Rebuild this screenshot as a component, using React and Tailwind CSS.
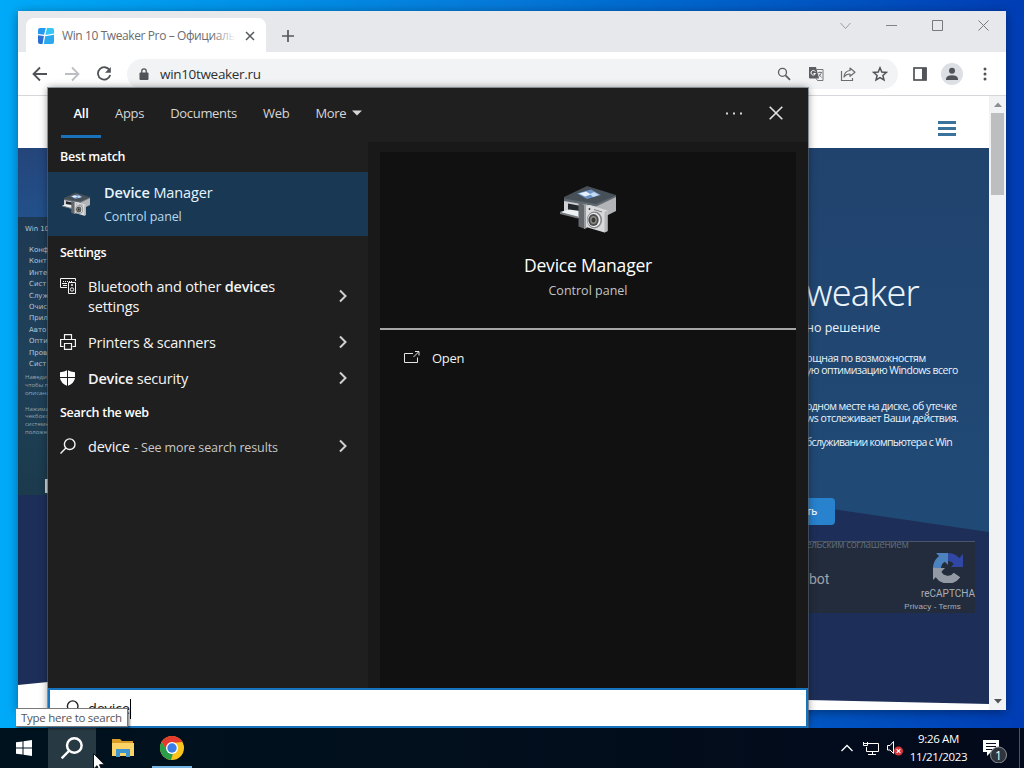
import React, { useState } from 'react';

const tabs = ['Apps', 'Documents', 'Web'];

const menuItems = ['Конф', 'Конт', 'Инте', 'Сист', 'Служ', 'Очис', 'Прил', 'Авто', 'Опти', 'Пров', 'Сист'];

const Chevron = () => (
  <svg className="-mr-px" width="10" height="14" viewBox="0 0 10 14" fill="none" stroke="#d0d0d0" strokeWidth="2">
    <path d="M2 1.5 7.5 7 2 12.5" />
  </svg>
);

const DeviceIcon = ({ className }) => (
  <svg className={className} viewBox="0 0 56 48">
    <path d="M4 12 27 1 56 10 36 20 4 14Z" fill="#465056" />
    <path d="M4 13.500 36 19 56 10 56 12.500 36 22 4 16.500Z" fill="#5d676d" />
    <path d="M4 16 36 21.500 36 36 4 28Z" fill="#cfd0d3" />
    <path d="M36 21.500 56 12 56 26 36 36Z" fill="#b2b4b7" />
    <path d="M17 8.500 31 4.500 41 10 27 14Z" fill="#6f93c4" />
    <path d="M19 8.500 26 6.500 31 9.500 25 11.500Z" fill="#e4f0fb" />
    <path d="M30 9 34 7 39 10 33 12Z" fill="#c4daf2" />
    <path d="M8 18.500 21 21 21 28 8 25Z" fill="#23282d" />
    <path d="M0 27 9 24.500 20 26 20 33 16 32.500Z" fill="#eef1f2" />
    <path d="M0 27 18 31.500 18 33.500 0 29Z" fill="#757b80" />
    <path d="M18.500 18 25 20 25 44 18.500 41.500Z" fill="#63676b" />
    <path d="M24 20 27 18.500 27 43 24 44Z" fill="#989b9e" />
    <path d="M26 20.500 30 20 47.500 25.500 47.500 46 44.500 47.500 26 42Z" fill="#d9dadc" />
    <path d="M44.500 27 47.500 25.500 47.500 46 44.500 47.500Z" fill="#b6b8ba" />
    <circle cx="29.500" cy="24" r=".9" fill="#33373a" />
    <path d="M34 24.500 42 27" stroke="#777b7e" />
    <ellipse cx="34.500" cy="35" rx="7.600" ry="8.400" fill="#85878a" />
    <ellipse cx="34" cy="35" rx="6.500" ry="7.200" fill="#ededee" />
    <ellipse cx="33.500" cy="35" rx="5.200" ry="6" fill="#4a4d50" />
    <ellipse cx="33.500" cy="35" rx="3.400" ry="4" fill="#8b8a86" />
    <ellipse cx="33.500" cy="35" rx="2" ry="2.500" fill="#3a3832" />
  </svg>
);

const Magnifier = ({ className, color, width = 1.4 }) => (
  <svg className={className} viewBox="0 0 16 16" fill="none" stroke={color} strokeWidth={width}>
    <circle cx="9.700" cy="6.200" r="5.300" />
    <path d="M5.900 10 .5 15.500" />
  </svg>
);

const TabStrip = () => (
  <div className="flex h-[41px] shrink-0 items-end bg-[#e7e8eb] pl-2">
    <div className="flex h-[34px] w-[240px] items-center rounded-t-lg bg-white pl-3 pr-[11px] pt-px">
      <svg className="h-4 w-4 shrink-0" viewBox="0 0 16 16">
        <path d="M2 0H7.800L6 6.800 0 6V2Q0 0 2 0Z" fill="#2499ee" />
        <path d="M9 0H14Q16 0 16 2V5.500L7.300 7Z" fill="#35c6f6" />
        <path d="M0 7.200 5.900 8 4.500 16H2Q0 16 0 14Z" fill="#2b6fd6" />
        <path d="M7.200 8.200 16 6.800V14Q16 16 14 16H5.800Z" fill="#2aa8f0" />
      </svg>
      <div className="relative ml-2 w-[174px] overflow-hidden whitespace-nowrap text-[12px] tracking-[-0.4px] text-[#6b6d70]">
        Win 10 Tweaker Pro – Официаль
        <span className="absolute right-0 top-0 h-full w-6 bg-gradient-to-r from-transparent to-white" />
      </div>
      <svg className="ml-auto h-2.5 w-2.5" viewBox="0 0 10 10" stroke="#55585c" strokeWidth="1.500">
        <path d="M1 1 9 9M9 1 1 9" />
      </svg>
    </div>
    <svg className="mb-2.5 ml-4 h-3 w-3" viewBox="0 0 12 12" stroke="#55585c" strokeWidth="1.700">
      <path d="M6 0V12M0 6H12" />
    </svg>
    <div className="ml-auto mb-[21px] flex items-center gap-[35px] pr-[17px]">
      <svg width="11" height="11" viewBox="0 0 11 11" fill="none" stroke="#9a9ca0">
        <path d="M.5 3 5.500 8.500 10.500 3" />
      </svg>
      <svg width="11" height="11" viewBox="0 0 11 11" stroke="#808285">
        <path d="M0 5.500H11" />
      </svg>
      <svg width="11" height="11" viewBox="0 0 11 11" fill="none" stroke="#77797c">
        <path d="M.5.5H10.500V10.500H.5Z" />
      </svg>
      <svg width="11" height="11" viewBox="0 0 11 11" stroke="#77797c">
        <path d="M.5.5 10.500 10.500M10.500.5.5 10.500" />
      </svg>
    </div>
  </div>
);

const Toolbar = () => (
  <div className="flex h-11 shrink-0 items-center border-b border-[#d5d7da] bg-white pl-3.5">
    <svg className="h-4 w-4" viewBox="0 0 16 16" fill="none" stroke="#505357" strokeWidth="1.800">
      <path d="M15 8H2M8 1.500 1.500 8 8 14.500" />
    </svg>
    <svg className="ml-4 h-4 w-4" viewBox="0 0 16 16" fill="none" stroke="#bcbec1" strokeWidth="1.800">
      <path d="M1 8H14M8 1.500 14.500 8 8 14.500" />
    </svg>
    <svg className="ml-4 h-4 w-4" viewBox="0 0 16 16" fill="none" stroke="#505357" strokeWidth="1.800">
      <path d="M13.500 4.200A6.200 6.200 0 1 0 14.200 9" />
      <path d="M14.800 1V6.700H9Z" fill="#505357" stroke="none" />
    </svg>
    <div className="ml-[15px] flex h-[30px] w-[771px] items-center rounded-full bg-[#f1f3f4] pl-3 pr-2.5">
      <svg className="h-3 w-2.5" viewBox="0 0 10 12">
        <rect x=".5" y="4.500" width="9" height="7.500" rx="1" fill="#505357" />
        <path d="M2.800 5V3A2.200 2.200 0 0 1 7.200 3V5" fill="none" stroke="#505357" strokeWidth="1.300" />
      </svg>
      <span className="ml-[11px] pt-0.5 text-[13.500px] tracking-[-0.32px] text-[#2e3033]">win10tweaker.ru</span>
      <div className="ml-auto flex items-center gap-4">
        <svg className="h-4 w-4" viewBox="0 0 16 16" fill="none" stroke="#5b5e62" strokeWidth="1.300">
          <circle cx="6.500" cy="6.300" r="4" />
          <path d="M9.500 9.300 14 13.800" strokeWidth="1.800" />
        </svg>
        <svg className="h-4 w-4" viewBox="0 0 16 16">
          <path d="M1 1H8L11 12.500H2Q1 12.500 1 11.500Z" fill="#5b5e62" />
          <path d="M8.300 3.500H15V14.500H9.500L8 12.500" fill="none" stroke="#74777b" />
          <path d="M7.300 5.600A2.300 2.300 0 1 0 7.500 7.500H5.500" fill="none" stroke="#fff" />
          <path d="M10 6.500H14M12 5.500V6.500M13.500 6.500Q12.500 9.500 10.300 11M10.700 8 13.500 11.500" fill="none" stroke="#74777b" strokeWidth=".9" />
        </svg>
        <svg className="h-4 w-4" viewBox="0 0 16 16" fill="none" stroke="#6b6e72" strokeWidth="1.200">
          <path d="M1.500 5V14.500H12.500V12" />
          <path d="M10 2 15 6.200 10 10.300V8Q6 8 4 11 4.500 5 10 4.500Z" strokeLinejoin="round" />
        </svg>
        <svg className="h-4 w-4" viewBox="0 0 16 16" fill="none" stroke="#505357" strokeWidth="1.500">
          <path d="M8 1.800 9.800 6 14.400 6.400 10.900 9.400 12 13.900 8 11.500 4 13.900 5.100 9.400 1.600 6.400 6.200 6Z" />
        </svg>
      </div>
    </div>
    <svg className="ml-[15px] h-3.5 w-3.5" viewBox="0 0 14 14">
      <rect x="1" y="1" width="12" height="12" fill="none" stroke="#505357" strokeWidth="1.700" />
      <rect x="9" y="1" width="4.500" height="12" fill="#505357" />
    </svg>
    <svg className="ml-3.5 h-[22px] w-[22px]" viewBox="0 0 22 22">
      <circle cx="11" cy="11" r="11" fill="#dcdfe3" />
      <circle cx="11" cy="7.800" r="3" fill="#505357" />
      <path d="M5 17V15.500Q6 12.300 11 12.300T17 15.500V17Z" fill="#505357" />
    </svg>
    <svg className="ml-5 h-3.5 w-1" viewBox="0 0 4 14" fill="#505357">
      <circle cx="2" cy="2" r="1.500" />
      <circle cx="2" cy="7" r="1.500" />
      <circle cx="2" cy="12" r="1.500" />
    </svg>
  </div>
);

const WebPage = () => (
  <div className="flex min-h-0 flex-1">
    <div className="flex min-w-0 flex-1 flex-col">
      <div className="flex h-[52px] shrink-0 items-center justify-end bg-white pr-[33px] pt-3">
        <div className="flex w-[18px] flex-col gap-[3px]">
          <span className="h-[3px] bg-[#39739c]" />
          <span className="h-[3px] bg-[#39739c]" />
          <span className="h-[3px] bg-[#39739c]" />
        </div>
      </div>
      <div className="relative flex min-h-0 flex-1 justify-between overflow-hidden bg-white">
        <div className="absolute inset-0 bg-[#1d2f58] [clip-path:polygon(0_0,100%_0,100%_556px,790px_552px,30px_534px,0_537px)]" />
        <div className="absolute inset-0 bg-gradient-to-b from-[#20436d] to-[#204a76] to-[384px] [clip-path:polygon(760px_0,100%_0,100%_384px,760px_353px)]" />
        <div className="relative w-[30px] overflow-hidden whitespace-nowrap">
          <div className="h-[69px] bg-gradient-to-b from-[#24457a] to-[#22508a]" />
          <div className="h-[278px] bg-gradient-to-b from-[#1e3953] via-[#20415a] to-[#1b3a4c] pl-[7px] pt-[5px] text-[#b6c6d2]">
            <div className="font-[DejaVu_Sans] text-[7px] leading-[14px]">Win 10</div>
            <div className="pl-1 pt-[9px] font-[DejaVu_Sans] text-[7px] leading-[11.400px]">
              {menuItems.map((item, i) => (
                <div key={i}>{item}</div>
              ))}
            </div>
            <div className="pt-1 text-[6px] leading-[7.700px] text-[#8fa5b4]">
              Наведи
              <br />
              чтобы п
              <br />
              описани
            </div>
            <div className="pt-2 text-[6px] leading-[7.700px] text-[#8fa5b4]">
              Нажима
              <br />
              чекбокс
              <br />
              системн
              <br />
              положе
            </div>
            <div className="ml-5 mt-[43px] h-[14px] w-5 bg-[#cfd6da]" />
          </div>
        </div>
        <div className="relative flex w-[183px] flex-col whitespace-nowrap text-[#eaf3fb]">
          <div className="mt-[120px] font-['Noto_Sans'] text-[36px] font-light leading-[50px] tracking-[-0.75px]">weaker</div>
          <div className="pt-px text-[12.500px] leading-[18px]">но решение</div>
          <div className="-ml-[7px] mt-[15px] text-[10.500px] leading-3 tracking-[-0.4px]">
            мощная по возможностям
            <br />
            <span className="ml-[7px] tracking-[-0.52px]">ую оптимизацию Windows всего</span>
          </div>
          <div className="mt-6 text-[10.500px] leading-3 tracking-[-0.52px]">
            одном месте на диске, об утечке
            <br />
            <span className="tracking-[-0.44px]">ws отслеживает Ваши действия.</span>
          </div>
          <div className="mt-3 text-[10.500px] leading-3 tracking-[-0.67px]">бслуживании компьютера с Win</div>
          <div className="mt-[50px] h-[27px] w-[29px] rounded-r bg-[#2882cd] text-[10.500px] font-semibold leading-[27px] tracking-[-0.5px]">ть</div>
          <div className="mt-4 flex h-[72px] w-[169px] flex-col border-t border-[#4b5769] bg-[#232c3c]">
            <div className="h-1.5 text-[10px] leading-[4px] tracking-[-0.4px] text-[#5c6c7e]">ельским соглашением</div>
            <div className="flex justify-between">
              <span className="mt-[21px] pl-[3px] font-[Roboto] text-[14px] leading-5 text-[#9ea4ad]">bot</span>
              <div className="flex flex-col items-center font-[Roboto] text-[#a9afb8]">
                <svg className="ml-4 mt-1 h-[31px] w-8" viewBox="0 0 32 31" fill="none">
                  <path d="M16 5A11 11 0 0 0 5 16" stroke="#4c82bd" strokeWidth="8" />
                  <path d="M16 5Q22 5 25 10" stroke="#3047a5" strokeWidth="8" />
                  <path d="M31 2V15H19Z" fill="#3047a5" />
                  <path d="M5 16A11 11 0 0 0 25 23" stroke="#939aa5" strokeWidth="8" />
                  <path d="M1 28V16H13Z" fill="#939aa5" />
                  <path d="M4 1H16V13Z" fill="#4c82bd" />
                </svg>
                <span className="mt-1 self-end text-[10px] leading-[13px]">reCAPTCHA</span>
                <span className="mr-[14px] pt-px font-['Liberation_Sans'] text-[8px] leading-3 tracking-[0.12px]">Privacy - Terms</span>
              </div>
            </div>
          </div>
        </div>
      </div>
    </div>
    <div className="flex w-[17px] flex-col items-center justify-between bg-[#f1f2f3]">
      <div className="flex flex-col items-center">
        <svg width="8" height="17" viewBox="0 0 8 17">
          <path d="M0 11 4 6.500 8 11Z" fill="#8b8d90" />
        </svg>
        <div className="h-[82px] w-[13px] bg-[#bcbec0]" />
      </div>
      <svg width="8" height="17" viewBox="0 0 8 17">
        <path d="M0 6 4 10.500 8 6Z" fill="#505357" />
      </svg>
    </div>
  </div>
);

const ResultRow = ({ icon, children }) => (
  <div className="flex h-9 items-center pl-3 pr-[21px] text-[14.500px] text-[#f4f4f4]">
    <span className="mr-3 flex h-4 w-4 shrink-0">{icon}</span>
    <span className="flex-1 whitespace-nowrap pt-0.5">{children}</span>
    <Chevron />
  </div>
);

const SectionTitle = ({ children }) => (
  <div className="h-8 pl-3 text-[12.500px] font-semibold leading-[34px] tracking-[-0.27px] text-white">{children}</div>
);

const SearchPanel = ({ query }) => (
  <div className="absolute left-12 top-[88px] flex h-[640px] w-[760px] flex-col bg-[#1f1f1f] shadow-[0_0_0_1px_rgba(90,100,110,0.6),0_0_8px_rgba(0,0,0,0.45)]">
    <div className="flex h-[50px] shrink-0 text-[13px] leading-[50px] tracking-[-0.3px] text-[#d6d6d6]">
      <div className="ml-[13px] w-10 border-b-[3px] border-[#1a72bb] text-center font-semibold text-white">All</div>
      <div className="ml-[14px] flex gap-[26px]">
        {tabs.map((tab) => (
          <span key={tab}>{tab}</span>
        ))}
        <span className="flex items-center gap-1.5">
          More
          <svg width="10" height="6" viewBox="0 0 10 6">
            <path d="M0 .5H10L5 5.500Z" fill="#d6d6d6" />
          </svg>
        </span>
      </div>
      <div className="ml-auto flex items-center pr-[25px]">
        <svg width="16" height="3" viewBox="0 0 16 3" fill="#d6d6d6">
          <path d="M0 .5H2V2.500H0ZM7 .5H9V2.500H7ZM14 .5H16V2.500H14Z" />
        </svg>
        <svg className="ml-[27px]" width="14" height="14" viewBox="0 0 14 14" stroke="#e4e4e4" strokeWidth="1.600">
          <path d="M.7.7 13.300 13.300M13.300.7.7 13.300" />
        </svg>
      </div>
    </div>
    <div className="flex min-h-0 flex-1">
      <div className="w-80">
        <div className="h-[34px] pt-0.5">
          <SectionTitle>Best match</SectionTitle>
        </div>
        <div className="flex h-16 items-center bg-[#183853] pl-[14px]">
          <DeviceIcon className="h-6 w-7" />
          <div className="ml-[14px] pt-px">
            <div className="text-[14.500px] leading-[22px] tracking-[-0.1px] text-[#e6f4ff]">
              <span className="font-semibold">Device</span> Manager
            </div>
            <div className="mt-0.5 text-[12.500px] leading-[22px] tracking-[-0.1px] text-[#b8d8ee]">Control panel</div>
          </div>
        </div>
        <SectionTitle>Settings</SectionTitle>
        <div className="flex h-14 items-center pl-3 pr-[21px] text-[14.500px] leading-5 tracking-[-0.2px] text-[#f4f4f4]">
          <svg className="-mt-5 mr-3 h-4 w-4 shrink-0" viewBox="0 0 16 16" fill="none" stroke="#f4f4f4">
            <path d="M7 9.500H.5V.5H15.500V3M2 3.500H13M2 5.500H7M3 7.500H7" />
            <path d="M2 3.500H14" strokeDasharray="1 1" stroke="#1f1f1f" />
            <path d="M8.500 4.500H15.500V15.500H8.500Z" />
            <circle cx="12" cy="11.500" r="1.700" />
            <path d="M11 7H13" strokeWidth="1.500" />
          </svg>
          <span className="flex-1 pt-0.5">
            Bluetooth and other <span className="font-semibold">device</span>s<br />
            settings
          </span>
          <Chevron />
        </div>
        <ResultRow
          icon={
            <svg viewBox="0 0 16 16" fill="none" stroke="#f4f4f4" strokeWidth="1.200">
              <path d="M4.500 5.500V.6H11.500V5.500M3.500 12.500H.6V5.500H15.400V12.500H12.500M4.500 9.500H11.500V15.400H4.500Z" />
            </svg>
          }
        >
          <span className="tracking-[-0.24px]">Printers &amp; scanners</span>
        </ResultRow>
        <ResultRow
          icon={
            <svg viewBox="0 0 16 16">
              <path d="M7.500 0Q10.500 2 15 2.200V8Q14.500 13 7.500 16 .5 13 0 8V2.200Q4.500 2 7.500 0Z" fill="#fff" />
              <path d="M7.500 0V16M0 7.500H16" stroke="#1f1f1f" />
            </svg>
          }
        >
          <span className="tracking-[-0.2px]">
            <span className="font-semibold">Device</span> security
          </span>
        </ResultRow>
        <SectionTitle>Search the web</SectionTitle>
        <ResultRow icon={<Magnifier className="h-4 w-4" color="#f4f4f4" />}>
          <span className="tracking-[-0.2px]">{query}</span>
          <span className="ml-px text-[12.500px] tracking-[-0.13px] text-[#c8c8c8]"> - See more search results</span>
        </ResultRow>
      </div>
      <div className="mt-1 flex-1 bg-[#191919] px-3 pt-2.5">
        <div className="flex h-full flex-col bg-[#111111]">
          <div className="flex h-[178px] flex-col items-center border-b-2 border-[#a6a6a6] pt-[33px]">
            <DeviceIcon className="h-12 w-14" />
            <div className="mt-[18px] text-[17.500px] leading-7 tracking-[-0.2px] text-white">Device Manager</div>
            <div className="mt-0.5 text-[12.500px] leading-5 text-[#c4c4c4]">Control panel</div>
          </div>
          <div className="flex h-14 items-center pl-6 text-[13px] tracking-[-0.3px] text-[#f0f0f0]">
            <svg className="-mt-0.5 h-3 w-4" viewBox="0 0 16 12" fill="none" stroke="#e4e4e4">
              <path d="M9 2.500H.5V11.500H13.500V6.500M9.500 6 14.500 1M11 .5H15V4.500" />
            </svg>
            <span className="ml-3 pt-0.5">Open</span>
          </div>
        </div>
      </div>
    </div>
    <div className="flex h-10 shrink-0 items-center border-2 border-[#1673bd] bg-white pl-[13px]">
      <Magnifier className="h-4 w-4" color="#202020" />
      <span className="ml-[9px] mt-px border-r border-black text-[14.500px] leading-5 tracking-[-0.2px] text-[#151515]">{query}</span>
    </div>
  </div>
);

const Taskbar = () => (
  <div className="absolute bottom-0 left-0 flex h-10 w-full items-center bg-gradient-to-r from-[#00121e] to-[#030a1b] text-white">
    <div className="flex w-12 justify-center">
      <svg className="h-4 w-4" viewBox="0 0 16 16" fill="#fff">
        <path d="M0 2.300 6.500 1.400V7.500H0ZM7.500 1.200 16 0V7.500H7.500ZM0 8.500H6.500V14.600L0 13.700ZM7.500 8.500H16V16L7.500 14.800Z" />
      </svg>
    </div>
    <div className="flex h-10 w-12 items-center justify-center bg-[#273943]">
      <Magnifier className="h-[22px] w-[22px]" color="#fff" width={1.8} />
    </div>
    <div className="flex w-[52px] justify-center pl-0.5">
      <svg className="h-5 w-[22px]" viewBox="0 0 22 20">
        <path d="M0 1H8L10 3H21V6H0Z" fill="#d99c28" />
        <path d="M0 5H22V18H0Z" fill="#fbd367" />
        <path d="M4 11H18V19H14V15H8V19H4Z" fill="#3f96cf" />
      </svg>
    </div>
    <div className="flex h-10 w-12 flex-col items-center">
      <svg className="mb-1.5 mt-2 h-6 w-6" viewBox="0 0 24 24">
        <circle cx="12" cy="12" r="12" fill="#f9c51c" />
        <path d="M1.600 6A12 12 0 0 1 22.400 6L12 7 7 15Z" fill="#e43b2e" />
        <path d="M1.600 6 7 14.500Q9 18 13 17.500L11 24A12 12 0 0 1 1.600 6Z" fill="#2a9f4b" />
        <circle cx="12" cy="12" r="6" fill="#fff" />
        <circle cx="12" cy="12" r="4.700" fill="#3c7ce8" />
      </svg>
      <div className="h-0.5 w-10 bg-[#76b5e4]" />
    </div>
    <div className="ml-auto flex h-10 items-center">
      <svg width="12" height="8" viewBox="0 0 12 8" fill="none" stroke="#fff" strokeWidth="1.300">
        <path d="M.5 7 6 1.500 11.500 7" />
      </svg>
      <svg className="ml-2.5" width="16" height="15" viewBox="0 0 16 15" fill="none" stroke="#fff">
        <path d="M5 2.500H15.500V10.500H3.500V6M9.500 10.500V13.500M5 13.500H13M.5 1V4.500H4.500V1M.5 2.500H4.500" />
      </svg>
      <svg className="ml-2" width="16" height="16" viewBox="0 0 16 16" fill="none">
        <path d="M.5 5.500H3L6.500 1.500V13.500L3 10H.5Z" stroke="#fff" />
        <circle cx="11.500" cy="11" r="4.500" fill="#d9363b" />
        <path d="M9.700 9.200 13.300 12.800M13.300 9.200 9.700 12.800" stroke="#fff" strokeWidth="1.200" />
      </svg>
      <div className="w-[71px] whitespace-nowrap text-center text-[11.500px] leading-[18px] tracking-[-0.35px]">
        9:26 AM
        <br />
        11/21/2023
      </div>
      <svg className="ml-[9px] mt-1" width="25" height="25" viewBox="0 0 25 25">
        <path d="M0 2H16V14H8L4 18V14H0Z" fill="#fff" />
        <path d="M3 5.500H13M3 8.500H13M3 11.500H9" stroke="#08101f" />
        <circle cx="15.500" cy="17" r="8" fill="#30353d" stroke="#8d9299" />
        <text x="15.500" y="21.500" textAnchor="middle" fontSize="12" fill="#fff" fontFamily="Open Sans">1</text>
      </svg>
      <div className="ml-[11px] mr-1 h-10 w-px bg-[#4b5463]" />
    </div>
  </div>
);

const App = () => {
  const [query] = useState('device');

  return (
    <div className="relative h-[768px] w-[1024px] overflow-hidden bg-gradient-to-r from-[#00aaf8] via-[#0678d8] to-[#003db5] font-['Open_Sans',sans-serif]">
      <div className="absolute left-[18px] top-[11px] flex h-[699px] w-[988px] flex-col overflow-hidden bg-white shadow-[0_2px_10px_rgba(0,0,0,0.4)]">
        <TabStrip />
        <Toolbar />
        <WebPage />
      </div>
      <SearchPanel query={query} />
      <Taskbar />
      <div className="absolute left-[15px] top-[708px] h-[19px] w-[113px] whitespace-nowrap border border-[#777777] bg-white pl-[5px] text-[11.500px] leading-[18px] tracking-[-0.26px] text-[#555555] shadow-[2px_2px_2px_rgba(0,0,0,0.4)]">
        Type here to search
      </div>
      <svg className="absolute left-[93px] top-[753px]" width="12" height="19" viewBox="0 0 12 19">
        <path d="M.5.5V16L4 12.700 6.500 18.500 9 17.300 6.500 11.700H11.500Z" fill="#fff" stroke="#111" />
      </svg>
    </div>
  );
};

export default App;
